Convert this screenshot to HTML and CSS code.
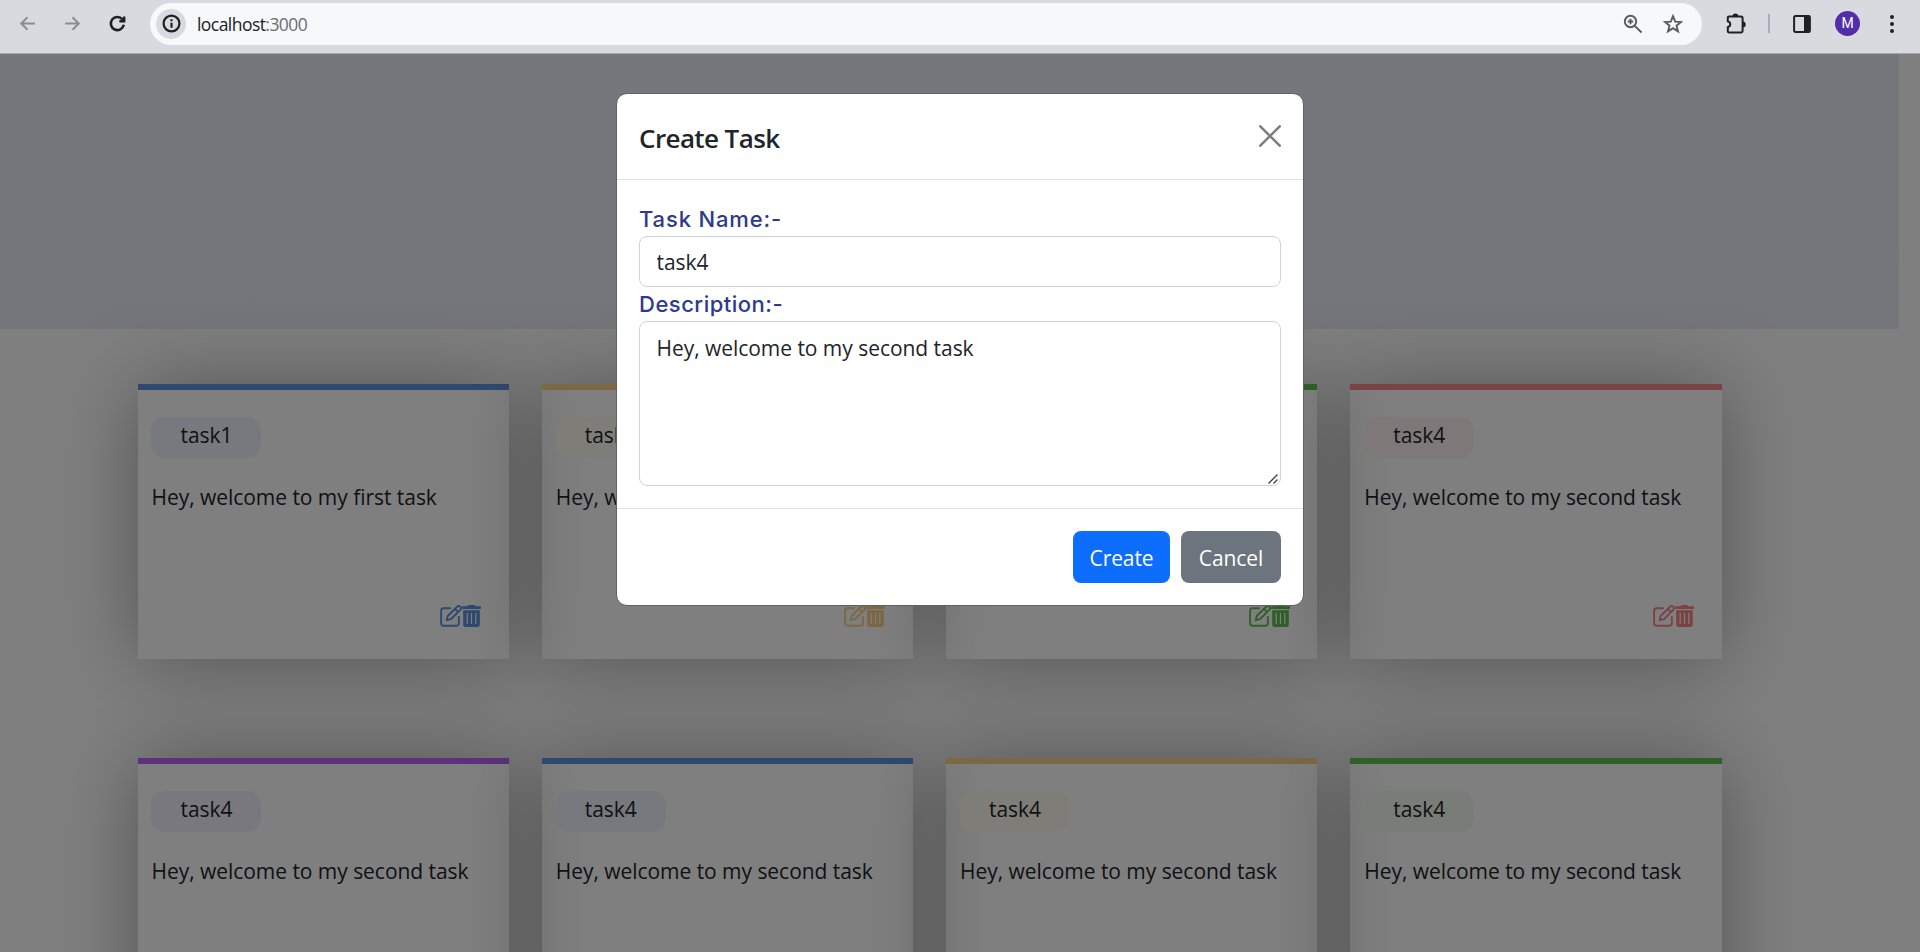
FILE: index.html
```html
<!DOCTYPE html>
<html lang="en">
<head>
<meta charset="utf-8">
<title>Task List</title>
<link rel="stylesheet" href="styles.css">
</head>
<body>
<svg class="sprite" aria-hidden="true">
  <symbol id="edit" viewBox="0 0 22 22"><path d="M10 3.2H3.6C2 3.2 1.1 4.100 1.100 5.700V18.300c0 1.600.9 2.500 2.500 2.500H16.400c1.600 0 2.500-.9 2.500-2.500V12" fill="none" stroke="currentColor" stroke-width="1.900" stroke-linecap="round"/><path d="M6.700 15.200 7.700 11 17.100 1.700a2.250 2.250 0 0 1 3.200 3.200L10.900 14.200ZM14.900 3.900l3.200 3.200" fill="none" stroke="currentColor" stroke-width="1.900" stroke-linejoin="round"/></symbol>
  <symbol id="trash" viewBox="0 0 19 22"><path d="M.6 1.300H5.600L6.300 0h6.400l.7 1.300h5c.8 0 .8 2.700 0 2.700H.6C-.2 4-.2 1.300.6 1.300Z" fill="currentColor"/><path fill-rule="evenodd" d="M1.200 5.200H17.800V19.500c0 1.600-.9 2.500-2.400 2.500H3.600c-1.500 0-2.400-.9-2.400-2.500ZM4.600 8v11h1.200V8ZM8.900 8v11h1.200V8ZM13.200 8v11h1.200V8Z" fill="currentColor"/></symbol>
</svg>
<div class="browser">
  <header class="toolbar">
    <svg class="nav-icon muted" viewBox="0 0 24 24"><path d="M20.500 12H5M12 4.800 4.800 12l7.200 7.200"/></svg>
    <svg class="nav-icon muted" viewBox="0 0 24 24"><path d="M3.500 12H19M12 4.800l7.200 7.200-7.200 7.200"/></svg>
    <svg class="nav-icon reload" viewBox="0 0 24 24"><path d="M19.200 13.500A7.500 7.500 0 1 1 17.600 7.200l1.200 1.400M19.600 4v5.400h-5.500"/></svg>
    <div class="address">
      <span class="info"><svg viewBox="0 0 24 24"><circle cx="12" cy="12" r="10"/><path d="M12 11v6.500M12 6.500v2.600"/></svg></span>
      <span class="url">localhost<span class="port">:3000</span></span>
      <svg class="bar-icon magnify" viewBox="0 0 20 20"><circle cx="7.500" cy="7.500" r="5.700"/><path d="M11.800 11.800 18.500 18.500M7.500 4.800v5.400M4.800 7.500h5.400"/></svg>
      <svg class="bar-icon" viewBox="0 0 20 20"><path d="m10 2.200 2.200 5.400 5.800.4-4.500 3.700 1.500 5.700-5-3.200-5 3.200 1.500-5.700L2 8l5.800-.4Z"/></svg>
    </div>
    <svg class="ext" viewBox="0 0 22 22"><path d="M2.800 4.500c0-.7.400-1.100 1.100-1.100H16c.9 0 1.600.6 1.600 1.500v13.200c0 .8-.6 1.400-1.400 1.400H4.100c-.8 0-1.300-.5-1.300-1.300v-4c3.300-1.200 3.300-4.800 0-6Z" fill="none" stroke="currentColor" stroke-width="2"/><path d="M7.500 3a2.900 2.500 0 0 1 5.800 0ZM18 8.500a2.700 2.900 0 0 1 0 5.800Z" fill="currentColor"/></svg>
    <span class="divider"></span>
    <svg class="panel" viewBox="0 0 18 18"><rect x="1.100" y="1.100" width="15.800" height="15.800" rx="1.200" fill="none" stroke="currentColor" stroke-width="2"/><path d="M11 1h6v16h-6Z" fill="currentColor"/></svg>
    <span class="avatar">M</span>
    <svg class="dots" viewBox="0 0 6 20"><circle cx="3" cy="3" r="2"/><circle cx="3" cy="10" r="2"/><circle cx="3" cy="17" r="2"/></svg>
  </header>

  <div class="page">
    <div class="hero"></div>
    <main class="tasks">
      <article class="card blue"><div class="pill">task1</div><p class="desc">Hey, welcome to my first task</p><div class="actions"><svg class="edit"><use href="#edit"/></svg><svg class="trash"><use href="#trash"/></svg></div></article>
      <article class="card yellow"><div class="pill">task2</div><p class="desc">Hey, welcome to my second task</p><div class="actions"><svg class="edit"><use href="#edit"/></svg><svg class="trash"><use href="#trash"/></svg></div></article>
      <article class="card green"><div class="pill">task3</div><p class="desc">Hey, welcome to my second task</p><div class="actions"><svg class="edit"><use href="#edit"/></svg><svg class="trash"><use href="#trash"/></svg></div></article>
      <article class="card red"><div class="pill">task4</div><p class="desc">Hey, welcome to my second task</p><div class="actions"><svg class="edit"><use href="#edit"/></svg><svg class="trash"><use href="#trash"/></svg></div></article>
      <article class="card purple"><div class="pill">task4</div><p class="desc">Hey, welcome to my second task</p></article>
      <article class="card blue"><div class="pill">task4</div><p class="desc">Hey, welcome to my second task</p></article>
      <article class="card yellow"><div class="pill">task4</div><p class="desc">Hey, welcome to my second task</p></article>
      <article class="card green"><div class="pill">task4</div><p class="desc">Hey, welcome to my second task</p></article>
    </main>

    <div class="backdrop">
      <section class="modal" role="dialog" aria-label="Create Task">
        <div class="modal-head">
          <h5 class="modal-title">Create Task</h5>
          <svg class="close" viewBox="0 0 22 22"><path d="M1.300 1.300 20.700 20.700M20.700 1.300 1.300 20.700"/></svg>
        </div>
        <div class="modal-body">
          <label class="label name-label" for="name">Task Name:-</label>
          <input class="field" id="name" type="text" value="task4">
          <label class="label desc-label" for="desc">Description:-</label>
          <div class="area-wrap">
            <textarea class="field area" id="desc">Hey, welcome to my second task</textarea>
            <svg class="grip" viewBox="0 0 10 10"><path d="M.5 9.500 9.500.5M5.500 9.500 9.500 5.500"/></svg>
          </div>
        </div>
        <div class="modal-foot">
          <button class="btn primary">Create</button>
          <button class="btn secondary">Cancel</button>
        </div>
      </section>
    </div>
  </div>
</div>
</body>
</html>
```
FILE: styles.css
```css
* { box-sizing: border-box; }
body {
  margin: 0;
  font-family: "Open Sans", "Noto Sans", sans-serif;
  font-size: 21px;
  line-height: 33px;
  letter-spacing: -0.04px;
  color: #212529;
}
.sprite { position: absolute; width: 0; height: 0; }
.browser { display: flex; flex-direction: column; height: 952px; overflow: hidden; }

.toolbar {
  display: flex;
  align-items: center;
  flex: none;
  height: 54px;
  padding: 0 18px 6px 17px;
  background: #d9dae0;
  border-bottom: 1px solid #a3a7ae;
  color: #1f2024;
}
.nav-icon { width: 21px; height: 21px; margin-right: 24px; fill: none; stroke: currentColor; stroke-width: 2.2; }
.nav-icon.muted { color: #8c8d92; }
.nav-icon.reload { margin-right: 22px; stroke-width: 2.9; }
.address {
  display: flex;
  align-items: center;
  width: 1552px;
  height: 42px;
  padding: 0 19px 0 6px;
  border-radius: 21px;
  background: #f6f8fa;
}
.info { display: flex; align-items: center; justify-content: center; width: 30px; height: 30px; border-radius: 50%; background: #d9dae0; }
.info svg { width: 19px; height: 19px; fill: none; stroke: #1f2024; stroke-width: 2.8; }
.url { flex: 1; margin-left: 11px; padding-top: 1px; font-size: 17.5px; letter-spacing: -0.55px; color: #202124; }
.port { color: #6b6d70; }
.bar-icon { width: 20px; height: 20px; fill: none; stroke: #5a5b5f; stroke-width: 1.9; }
.magnify { margin-right: 20px; }
.ext { width: 22px; height: 22px; margin-left: 23px; }
.divider { width: 2px; height: 19px; margin-left: 21px; background: #a5afba; }
.panel { width: 18px; height: 18px; margin-left: 23px; }
.avatar { width: 25px; height: 25px; margin-left: 24px; border-radius: 50%; background: #512da8; color: #fff; font: 14px/25px Roboto, sans-serif; text-align: center; }
.dots { width: 6px; height: 20px; margin-left: 29px; fill: #1f2024; }

.page { position: relative; flex: 1; min-height: 0; overflow: hidden; background: #fff; }
.hero { width: 1899px; height: 275px; background: linear-gradient(#e8eff6 70%, #e7ecf4); }
.tasks {
  display: grid;
  grid-template-columns: repeat(4, 371.25px);
  gap: 99px 33px;
  padding: 55px 0 0 137.7px;
}
.card {
  display: flex;
  flex-direction: column;
  align-items: flex-start;
  height: 275px;
  padding: 27px 27.8px 32px 13.8px;
  border-top: 6px solid var(--main);
  box-shadow: 0 2px 78px 0 rgba(0, 0, 0, 0.34);
}
.blue { --main: #5d93e1; --soft: #ecf3fc; }
.yellow { --main: #f9d288; --soft: #fefaf1; }
.green { --main: #5dc250; --soft: #f2faf1; }
.red { --main: #f48687; --soft: #fdf1f1; }
.purple { --main: #b964f7; --soft: #f3f0fd; }
.pill { width: 110px; height: 41px; padding: 2px 0 0 29px; border-radius: 14px; background: var(--soft); }
.desc { margin: 23px 0 0; white-space: nowrap; }
.actions { display: flex; align-self: flex-end; margin-top: auto; color: var(--main); }
.edit { width: 22px; height: 22px; }
.trash { width: 19px; height: 22px; }

.backdrop { position: absolute; inset: 0; padding-top: 39px; background: rgba(0, 0, 0, 0.5); }
.modal {
  width: 688px;
  height: 513px;
  margin: 0 auto;
  border: 1px solid #5f6164;
  border-radius: 11px;
  background: #fff;
}
.modal-head { display: flex; justify-content: space-between; height: 86px; padding: 24px 22px 0; border-bottom: 1px solid #dee2e6; }
.modal-title { margin: 0; font-size: 26px; line-height: 40px; font-weight: 600; letter-spacing: -0.6px; }
.close { width: 22px; height: 22px; margin-top: 7px; fill: none; stroke: #7f7f7f; stroke-width: 2.6; stroke-linecap: round; }
.modal-body { display: flex; flex-direction: column; height: 328px; padding: 22px; }
.label { height: 34px; font-family: Inter, sans-serif; font-size: 22px; line-height: 35px; font-weight: 500; color: #2f3a8c; }
.name-label { letter-spacing: 0.85px; }
.desc-label { letter-spacing: 0.5px; }
.field {
  display: block;
  width: 642px;
  height: 51px;
  padding: 8px 16.5px;
  border: 1px solid #ced4da;
  border-radius: 8px;
  outline: 0;
  background: #fff;
  color: #212529;
  font: inherit;
  letter-spacing: inherit;
}
.area-wrap { position: relative; }
.area { height: 165px; padding-top: 10px; resize: none; }
.grip { position: absolute; right: 3px; bottom: 2px; width: 10px; height: 10px; fill: none; stroke: #3f4144; stroke-width: 1.3; }
.modal-foot { display: flex; justify-content: flex-end; gap: 11px; padding: 22px; border-top: 1px solid #dee2e6; }
.btn { height: 52px; padding: 2px 0 0; border: 0; border-radius: 8px; color: #fff; font: inherit; letter-spacing: -0.1px; }
.primary { width: 97px; background: #0d6efd; }
.secondary { width: 100px; background: #6c757d; }
```
